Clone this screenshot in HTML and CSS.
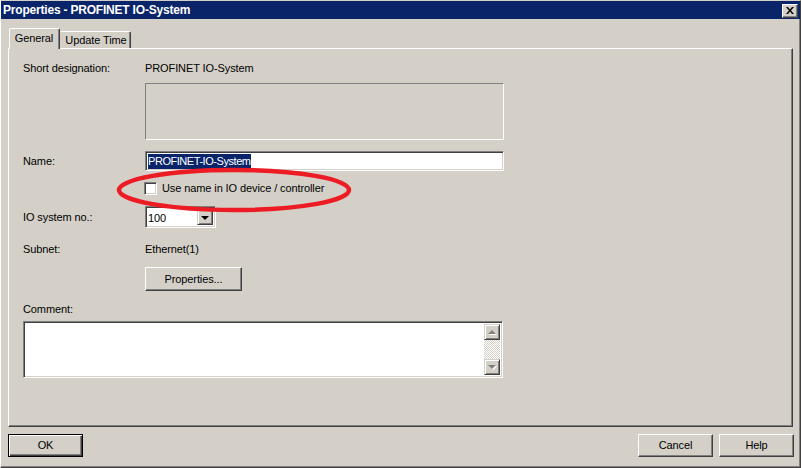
FILE: index.html
```html
<!DOCTYPE html>
<html>
<head>
<meta charset="utf-8">
<link rel="stylesheet" href="styles.css">
</head>
<body>
<div class="window">
  <div class="titlebar">
    <span class="title">Properties - PROFINET IO-System</span>
    <div class="close">
      <svg width="8" height="7" viewBox="0 0 8 7"><path d="M0 0h2l2 2.5L6 0h2L5 3.5 8 7H6L4 4.5 2 7H0l3-3.5z" fill="#000"/></svg>
    </div>
  </div>
  <div class="tabs">
    <div class="tab active">General</div>
    <div class="tab">Update Time</div>
  </div>
  <div class="panel">
    <div class="row r-short"><span class="label">Short designation:</span><span class="value">PROFINET IO-System</span></div>
    <div class="row r-box"><span class="label"></span><div class="graybox"></div></div>
    <div class="row r-name"><span class="label">Name:</span><div class="field name"><span class="sel">PROFINET-IO-System</span></div></div>
    <div class="row r-check"><span class="label"></span><span class="checkbox"></span><span class="check-label">Use name in IO device / controller</span></div>
    <div class="row r-combo"><span class="label">IO system no.:</span>
      <div class="field combo"><span class="combo-text">100</span><span class="dropbtn"><span class="arrow-down"></span></span></div>
    </div>
    <div class="row r-subnet"><span class="label">Subnet:</span><span class="value">Ethernet(1)</span></div>
    <div class="row r-props"><span class="label"></span><div class="btn props">Properties...</div></div>
    <div class="row r-comment"><span class="label">Comment:</span></div>
    <div class="field comment">
      <div class="textarea-body"></div>
      <div class="scrollbar">
        <span class="sbtn"><span class="tri up"></span></span>
        <span class="track"></span>
        <span class="sbtn"><span class="tri down"></span></span>
      </div>
    </div>
  </div>
  <div class="buttons">
    <div class="btn default">OK</div>
    <span class="spacer"></span>
    <div class="btn">Cancel</div>
    <div class="btn">Help</div>
  </div>
</div>
<svg class="annot" width="250" height="60" viewBox="0 0 250 60">
  <ellipse cx="124" cy="30" rx="115" ry="20" fill="none" stroke="#ed1c24" stroke-width="4.5"/>
</svg>
</body>
</html>
```

FILE: styles.css
```css
html, body {
  margin: 0;
  padding: 0;
}
body {
  width: 801px;
  height: 468px;
  overflow: hidden;
  font-family: "Liberation Sans", Arial, sans-serif;
  font-size: 11px;
  letter-spacing: -0.1px;
  color: #000;
  background: #d4d0c8;
}
.window {
  width: 801px;
  height: 468px;
  box-sizing: border-box;
  border-top: 1px solid #d4d0c8;
  border-left: 1px solid #ffffff;
  border-right: 1px solid #404040;
  border-bottom: 1px solid #404040;
  box-shadow: inset -1px -1px #808080;
  background: #d4d0c8;
  display: flex;
  flex-direction: column;
}
.titlebar {
  height: 18px;
  background: #0a246a;
  display: flex;
  align-items: flex-start;
  justify-content: space-between;
  padding: 0 2px 0 2px;
}
.title {
  color: #fff;
  font-weight: bold;
  font-size: 12px;
  line-height: 18px;
  letter-spacing: -0.2px;
}
.close {
  margin-top: 3px;
  width: 16px;
  height: 14px;
  box-sizing: border-box;
  background: #d4d0c8;
  border-top: 1px solid #fff;
  border-left: 1px solid #fff;
  border-right: 1px solid #404040;
  border-bottom: 1px solid #404040;
  box-shadow: inset -1px -1px #808080;
  display: flex;
  align-items: center;
  justify-content: center;
}
.close svg { display: block; margin-left: -1px; margin-top: -1px; }

.tabs {
  margin-top: 9px;
  height: 20px;
  display: flex;
  align-items: flex-end;
  padding-left: 8px;
}
.tab {
  height: 17px;
  box-sizing: border-box;
  width: 71px;
  border-top: 1px solid #fff;
  border-left: 1px solid #fff;
  border-right: 1px solid #404040;
  box-shadow: inset -1px 0 #808080;
  border-radius: 2px 2px 0 0;
  text-align: center;
  line-height: 16px;
  background: #d4d0c8;
}
.tab.active {
  width: 51px;
  height: 21px;
  margin-bottom: -1px;
  position: relative;
  z-index: 1;
  line-height: 18px;
  padding-right: 1px;
}
.tab.active + .tab {
  border-left: none;
  padding-left: 2px;
}

.panel {
  margin-left: 7px;
  width: 785px;
  height: 379px;
  box-sizing: border-box;
  border-top: 1px solid #fff;
  border-left: 1px solid #fff;
  border-right: 1px solid #404040;
  border-bottom: 1px solid #404040;
  box-shadow: inset -1px -1px #808080;
  padding: 13px 0 0 14px;
  display: flex;
  flex-direction: column;
  align-items: flex-start;
}
.row {
  display: flex;
  align-items: center;
}
.label {
  width: 122px;
  flex: none;
  line-height: 13px;
}
.value { line-height: 13px; }
.r-short { height: 13px; }
.r-box { margin-top: 8px; }
.graybox {
  width: 359px;
  height: 57px;
  box-sizing: border-box;
  border-top: 1px solid #808080;
  border-left: 1px solid #808080;
  border-right: 1px solid #fff;
  border-bottom: 1px solid #fff;
}
.field {
  box-sizing: border-box;
  background: #fff;
  border-top: 1px solid #808080;
  border-left: 1px solid #808080;
  border-right: 1px solid #fff;
  border-bottom: 1px solid #fff;
  box-shadow: inset 1px 1px #404040, inset -1px -1px #d4d0c8;
}
.r-name { margin-top: 11px; height: 20px; }
.field.name {
  width: 359px;
  height: 20px;
  padding: 2px 0 0 2px;
}
.sel {
  display: inline-block;
  background: #0a246a;
  color: #fff;
  line-height: 15px;
  height: 15px;
  letter-spacing: -0.45px;
}
.r-check { margin-top: 11px; height: 13px; }
.checkbox {
  width: 13px;
  height: 13px;
  box-sizing: border-box;
  margin-left: -1px;
  background: #fff;
  border-top: 1px solid #808080;
  border-left: 1px solid #808080;
  border-right: 1px solid #fff;
  border-bottom: 1px solid #fff;
  box-shadow: inset 1px 1px #404040, inset -1px -1px #d4d0c8;
}
.check-label { margin-left: 5px; line-height: 13px; }
.r-combo { margin-top: 11px; height: 22px; }
.field.combo {
  width: 71px;
  height: 22px;
  padding: 2px;
  display: flex;
  align-items: stretch;
}
.combo-text {
  flex: 1;
  line-height: 18px;
}
.dropbtn {
  width: 16px;
  box-sizing: border-box;
  background: #d4d0c8;
  border-top: 1px solid #d4d0c8;
  border-left: 1px solid #d4d0c8;
  border-right: 1px solid #404040;
  border-bottom: 1px solid #404040;
  box-shadow: inset 1px 1px #fff, inset -1px -1px #808080;
  display: flex;
  align-items: center;
  justify-content: center;
}
.arrow-down {
  width: 0;
  height: 0;
  border-left: 4px solid transparent;
  border-right: 4px solid transparent;
  border-top: 4px solid #000;
  margin-top: 1px;
}
.r-subnet { margin-top: 15px; height: 13px; }
.r-props { margin-top: 11px; }
.btn {
  box-sizing: border-box;
  width: 75px;
  height: 23px;
  background: #d4d0c8;
  border-top: 1px solid #fff;
  border-left: 1px solid #fff;
  border-right: 1px solid #404040;
  border-bottom: 1px solid #404040;
  box-shadow: inset -1px -1px #808080;
  display: flex;
  align-items: center;
  justify-content: center;
  line-height: 13px;
}
.btn.props { width: 97px; height: 24px; }
.btn.default {
  border: 1px solid #000;
  box-shadow: inset 1px 1px #fff, inset -1px -1px #404040, inset -2px -2px #808080;
}
.r-comment { margin-top: 12px; height: 13px; }
.field.comment {
  margin-top: 5px;
  width: 480px;
  height: 57px;
  padding: 2px;
  display: flex;
}
.textarea-body { flex: 1; }
.scrollbar {
  width: 16px;
  display: flex;
  flex-direction: column;
}
.sbtn {
  height: 16px;
  box-sizing: border-box;
  background: #d4d0c8;
  border-top: 1px solid #d4d0c8;
  border-left: 1px solid #d4d0c8;
  border-right: 1px solid #404040;
  border-bottom: 1px solid #404040;
  box-shadow: inset 1px 1px #fff, inset -1px -1px #808080;
  display: flex;
  align-items: center;
  justify-content: center;
}
.track {
  flex: 1;
  background-image: conic-gradient(#ffffff 25%, #d4d0c8 0 50%, #ffffff 0 75%, #d4d0c8 0);
  background-size: 2px 2px;
}
.tri {
  width: 0;
  height: 0;
  border-left: 4px solid transparent;
  border-right: 4px solid transparent;
}
.tri.up {
  border-bottom: 4px solid #808080;
  filter: drop-shadow(1px 1px 0 #fff);
}
.tri.down {
  border-top: 4px solid #808080;
  filter: drop-shadow(1px 1px 0 #fff);
}
.buttons {
  margin-top: 7px;
  display: flex;
  padding-left: 7px;
  padding-right: 6px;
  gap: 6px;
}
.spacer { flex: 1; }
.annot {
  position: absolute;
  left: 110px;
  top: 160px;
}
```
